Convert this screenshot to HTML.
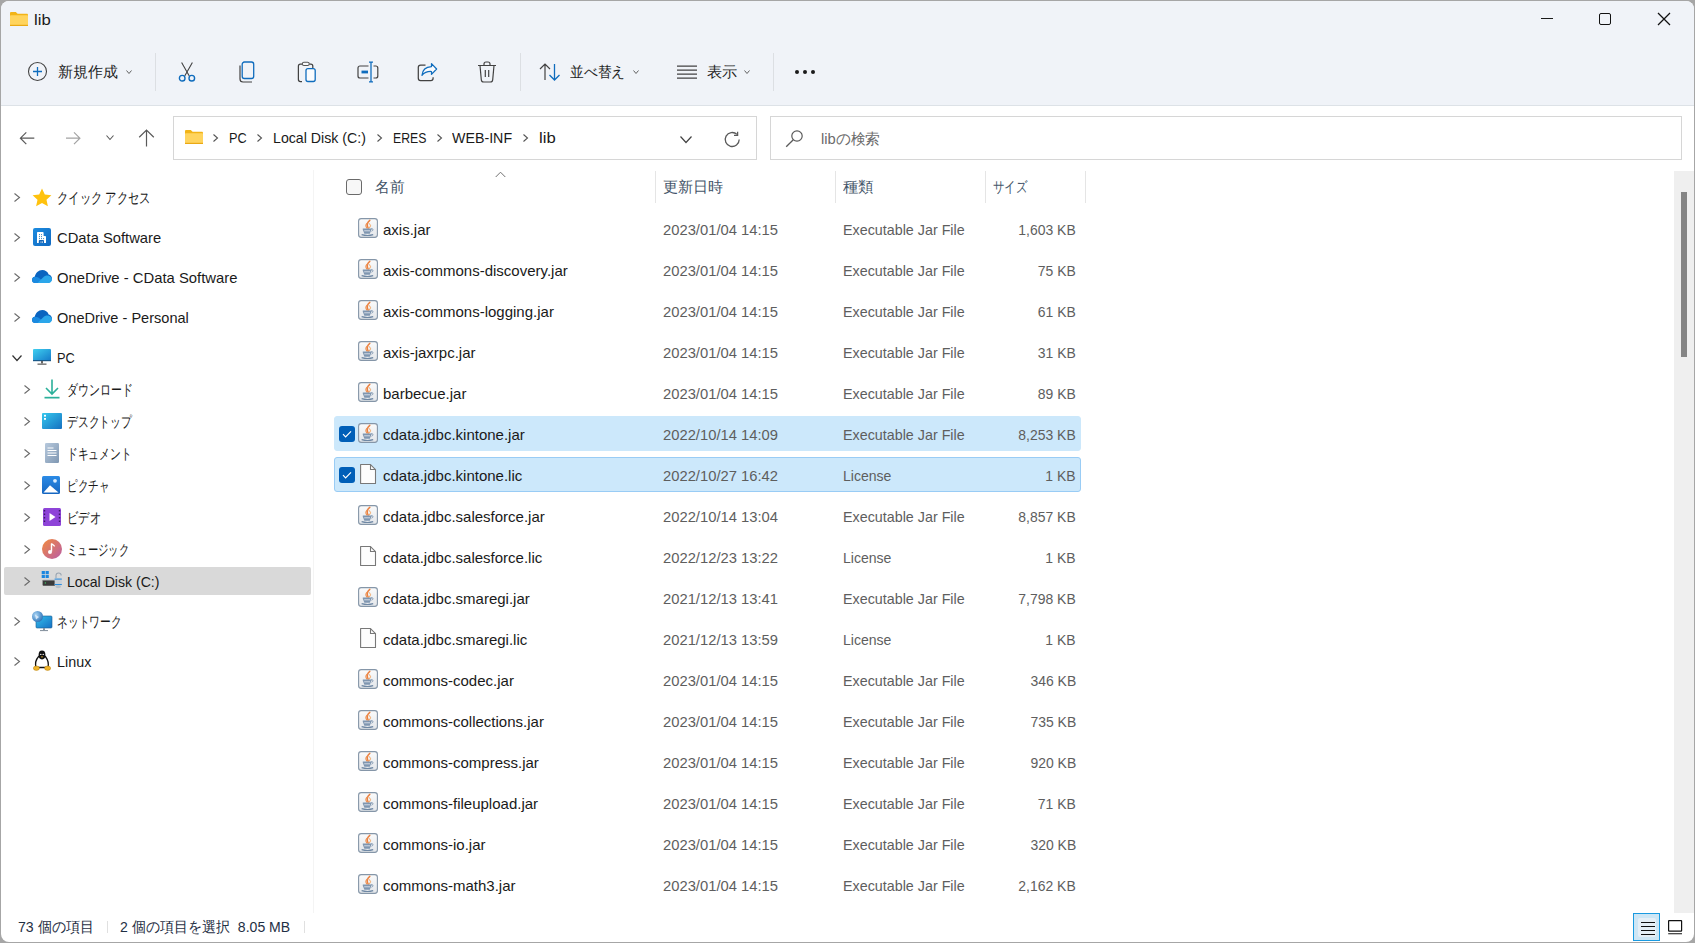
<!DOCTYPE html>
<html><head><meta charset="utf-8"><title>lib</title>
<style>
html,body{margin:0;padding:0;width:1695px;height:943px;overflow:hidden;background:#a6a6a6}
#win{position:absolute;left:0;top:0;width:1695px;height:943px;background:#fff;clip-path:inset(1px 1px 1px 1px round 8px)}
#band{position:absolute;left:0;top:0;width:1695px;height:105px;background:#f0f3f8;border-bottom:1px solid #dde2e7}
.abs,.ic,.t{position:absolute}
.t{font-family:"Liberation Sans",sans-serif;font-size:15px;line-height:20px;white-space:pre;color:#1a1a1a}
.title{font-size:14px;color:#1a1a1a}
.tb{color:#1f1f1f}
.addr{color:#1a1a1a}
.ph{color:#6b6b6b}
.side{color:#1a1a1a}
.hdr{color:#445569}
.nm{color:#1a1a1a}
.dt{color:#5e5e5e}
.st{color:#1f2f44}
.sep{width:1px;background:#dcdfe3}
</style></head><body>
<svg width="0" height="0" style="position:absolute"><defs>
<linearGradient id="jg" x1="0" y1="0" x2="0" y2="1"><stop offset="0" stop-color="#fbfbfb"/><stop offset="1" stop-color="#e3e6ea"/></linearGradient>
<linearGradient id="pcg" x1="0" y1="0" x2="1" y2="1"><stop offset="0" stop-color="#3fd0f0"/><stop offset="1" stop-color="#1478c8"/></linearGradient>
<linearGradient id="dkg" x1="0" y1="0" x2="1" y2="1"><stop offset="0" stop-color="#35c8ee"/><stop offset="1" stop-color="#1670c0"/></linearGradient>
<linearGradient id="dcg" x1="0" y1="0" x2="1" y2="1"><stop offset="0" stop-color="#b7c9dd"/><stop offset="1" stop-color="#7f97b2"/></linearGradient>
</defs></svg>
<div id="win">
<div id="band"></div>
<svg class="ic" style="left:10px;top:12px" width="18" height="14" viewBox="0 0 18 14">
<path d="M0 1.2C0 0.5 0.5 0 1.2 0h4.6l1.8 1.8h9.2c0.7 0 1.2 0.5 1.2 1.2V4H0z" fill="#f2b418"/>
<rect x="0" y="3.2" width="18" height="10.8" rx="0.8" fill="#ffd45e"/>
<rect x="0" y="12.8" width="18" height="1.2" fill="#eaa914"/>
</svg>
<div class="t title fit" style="left:34px;top:10px;transform:scaleX(1.1915);transform-origin:left center;">lib</div>
<div class="abs" style="left:1541px;top:18px;width:12px;height:1px;background:#1a1a1a"></div>
<div class="abs" style="left:1599px;top:13px;width:10px;height:10px;border:1.2px solid #111;border-radius:2px"></div>
<svg class="ic" style="left:1657px;top:12px" width="14" height="14" viewBox="0 0 14 14"><path d="M1 1L13 13M13 1L1 13" stroke="#111" stroke-width="1.25"/></svg>
<svg class="ic" style="left:27px;top:61px" width="21" height="21" viewBox="0 0 21 21"><circle cx="10.5" cy="10.5" r="9" fill="none" stroke="#424242" stroke-width="1.1"/><path d="M10.5 6v9M6 10.5h9" stroke="#0f6cbd" stroke-width="1.3"/></svg>
<div class="t tb fit" style="left:58px;top:62px;transform:scaleX(0.9950);transform-origin:left center;">新規作成</div>
<svg class="ic" style="left:125px;top:69.0px" width="8" height="6" viewBox="-1 -1 8 6"><path d="M0.5 0.5L3.0 3.5L5.5 0.5" fill="none" stroke="#606060" stroke-width="1"/></svg>
<div class="abs sep" style="left:155px;top:53px;height:38px"></div>
<svg class="ic" style="left:177px;top:61px" width="20" height="22" viewBox="0 0 20 22">
<path d="M4.6 1.4L12.3 15M15.4 1.4L7.7 15" stroke="#424242" stroke-width="1.1" fill="none"/>
<circle cx="5.2" cy="17.2" r="2.8" fill="none" stroke="#0f6cbd" stroke-width="1.4"/>
<circle cx="14.8" cy="17.2" r="2.8" fill="none" stroke="#0f6cbd" stroke-width="1.4"/>
</svg>
<svg class="ic" style="left:238px;top:61px" width="18" height="22" viewBox="0 0 18 22">
<path d="M2 4.5v13.5c0 1.7 1.3 3 3 3h9" fill="none" stroke="#424242" stroke-width="1.2"/>
<rect x="4.2" y="1" width="11.5" height="16.5" rx="2.2" fill="none" stroke="#0f6cbd" stroke-width="1.3"/>
</svg>
<svg class="ic" style="left:297px;top:61px" width="20" height="22" viewBox="0 0 20 22">
<path d="M5 20.5H3.4c-1.2 0-2-0.8-2-2V5.2c0-1.2 0.8-2 2-2h1.8M12.2 3.2h1.6c1.2 0 2 0.8 2 2v2" fill="none" stroke="#424242" stroke-width="1.25"/>
<rect x="5.4" y="1.3" width="6.8" height="3.2" rx="1.5" fill="#f8f9fb" stroke="#555" stroke-width="1.05"/>
<rect x="9" y="7.6" width="9.2" height="12.9" rx="2" fill="#fbfcfe" stroke="#0f6cbd" stroke-width="1.3"/>
</svg>
<svg class="ic" style="left:357px;top:61px" width="22" height="22" viewBox="0 0 22 22">
<path d="M11.5 5H3c-1.2 0-2 0.8-2 2v8c0 1.2 0.8 2 2 2h8.5M16.5 5h2.3c1.2 0 2 0.8 2 2v8c0 1.2-0.8 2-2 2h-2.3" fill="none" stroke="#424242" stroke-width="1.2"/>
<path d="M14 1v20M12 1.2h4M12 20.8h4" stroke="#0f6cbd" stroke-width="1.3"/>
<rect x="4.5" y="9.6" width="6.5" height="2.8" fill="#0f6cbd"/>
</svg>
<svg class="ic" style="left:417px;top:62px" width="21" height="21" viewBox="0 0 21 21">
<path d="M8.5 3H3.6C2.2 3 1.3 3.9 1.3 5.3v11c0 1.4 0.9 2.3 2.3 2.3h10.2c1.4 0 2.3-0.9 2.3-2.3v-1" fill="none" stroke="#424242" stroke-width="1.25"/>
<path d="M5 13.4C5.4 8 9 4.8 14.5 4.6V1.6L19.6 7L14.5 12.4V9.5C10.2 9.3 7.2 10.6 5 13.4Z" fill="#fbfcfe" stroke="#0f6cbd" stroke-width="1.25" stroke-linejoin="round"/>
</svg>
<svg class="ic" style="left:477px;top:61px" width="20" height="22" viewBox="0 0 20 22">
<path d="M1 4.5h18M7 4.2V3c0-1.1 0.9-2 2-2h2c1.1 0 2 0.9 2 2v1.2" fill="none" stroke="#424242" stroke-width="1.2"/>
<path d="M3 4.5l1.3 14.2c0.1 1.3 1.1 2.3 2.4 2.3h6.6c1.3 0 2.3-1 2.4-2.3L17 4.5" fill="none" stroke="#424242" stroke-width="1.2"/>
<path d="M8.3 9v7M11.7 9v7" stroke="#424242" stroke-width="1.2"/>
</svg>
<div class="abs sep" style="left:520px;top:53px;height:38px"></div>
<svg class="ic" style="left:539px;top:63px" width="22" height="18" viewBox="0 0 22 18">
<path d="M6 17V1M1 6l5-5 5 5" fill="none" stroke="#424242" stroke-width="1.2"/>
<path d="M15.5 1v16M10.5 12l5 5 5-5" fill="none" stroke="#0f6cbd" stroke-width="1.3"/>
</svg>
<div class="t tb fit" style="left:570px;top:62px;transform:scaleX(0.9167);transform-origin:left center;">並べ替え</div>
<svg class="ic" style="left:632px;top:69.0px" width="8" height="6" viewBox="-1 -1 8 6"><path d="M0.5 0.5L3.0 3.5L5.5 0.5" fill="none" stroke="#606060" stroke-width="1"/></svg>
<svg class="ic" style="left:676px;top:64px" width="22" height="16" viewBox="0 0 22 16">
<path d="M1 2.2h20M1 6.2h20M1 10.2h20M1 14.2h20" stroke="#424242" stroke-width="1.2"/>
</svg>
<div class="t tb fit" style="left:707px;top:62px;transform:scaleX(1.0133);transform-origin:left center;">表示</div>
<svg class="ic" style="left:743px;top:69.0px" width="8" height="6" viewBox="-1 -1 8 6"><path d="M0.5 0.5L3.0 3.5L5.5 0.5" fill="none" stroke="#606060" stroke-width="1"/></svg>
<div class="abs sep" style="left:773px;top:53px;height:38px"></div>
<svg class="ic" style="left:793px;top:69px" width="24" height="6" viewBox="0 0 24 6">
<circle cx="4" cy="3" r="2" fill="#1a1a1a"/><circle cx="12" cy="3" r="2" fill="#1a1a1a"/><circle cx="20" cy="3" r="2" fill="#1a1a1a"/>
</svg>
<svg class="ic" style="left:19px;top:131px" width="17" height="15" viewBox="0 0 17 15"><path d="M15.3 7.2H1.6M7.3 1.3L1.4 7.2l5.9 5.9" fill="none" stroke="#5a5a5a" stroke-width="1.2"/></svg>
<svg class="ic" style="left:65px;top:131px" width="17" height="15" viewBox="0 0 17 15"><path d="M1 7.2h13.8M9 1.3l5.9 5.9L9 13.1" fill="none" stroke="#a3a3a3" stroke-width="1.2"/></svg>
<svg class="ic" style="left:105px;top:133.5px" width="10" height="7" viewBox="-1 -1 10 7"><path d="M0.5 0.5L4.0 4.5L7.5 0.5" fill="none" stroke="#5a5a5a" stroke-width="1.1"/></svg>
<svg class="ic" style="left:138px;top:129px" width="17" height="18" viewBox="0 0 17 18"><path d="M8.5 17.5V1.5M1.2 8.3l7.3-7.2 7.3 7.2" fill="none" stroke="#5a5a5a" stroke-width="1.2"/></svg>
<div class="abs" style="left:173px;top:116px;width:582px;height:42px;border:1px solid #d6d6d6;background:#fff"></div>
<svg class="ic" style="left:185px;top:130px" width="18" height="14" viewBox="0 0 18 14">
<path d="M0 1.2C0 0.5 0.5 0 1.2 0h4.6l1.8 1.8h9.2c0.7 0 1.2 0.5 1.2 1.2V4H0z" fill="#f2b418"/>
<rect x="0" y="3.2" width="18" height="10.8" rx="0.8" fill="#ffd45e"/>
<rect x="0" y="12.8" width="18" height="1.2" fill="#eaa914"/>
</svg>
<svg class="ic" style="left:212px;top:133.0px" width="7" height="10" viewBox="-1 -1 7 10"><path d="M0.5 0.5L4.5 4.0L0.5 7.5" fill="none" stroke="#555" stroke-width="1.1"/></svg>
<div class="t addr fit" style="left:229px;top:128px;transform:scaleX(0.8492);transform-origin:left center;">PC</div>
<svg class="ic" style="left:256px;top:133.0px" width="7" height="10" viewBox="-1 -1 7 10"><path d="M0.5 0.5L4.5 4.0L0.5 7.5" fill="none" stroke="#555" stroke-width="1.1"/></svg>
<div class="t addr fit" style="left:273px;top:128px;transform:scaleX(0.9445);transform-origin:left center;">Local Disk (C:)</div>
<svg class="ic" style="left:376px;top:133.0px" width="7" height="10" viewBox="-1 -1 7 10"><path d="M0.5 0.5L4.5 4.0L0.5 7.5" fill="none" stroke="#555" stroke-width="1.1"/></svg>
<div class="t addr fit" style="left:393px;top:128px;transform:scaleX(0.8174);transform-origin:left center;">ERES</div>
<svg class="ic" style="left:436px;top:133.0px" width="7" height="10" viewBox="-1 -1 7 10"><path d="M0.5 0.5L4.5 4.0L0.5 7.5" fill="none" stroke="#555" stroke-width="1.1"/></svg>
<div class="t addr fit" style="left:452px;top:128px;transform:scaleX(0.9490);transform-origin:left center;">WEB-INF</div>
<svg class="ic" style="left:522px;top:133.0px" width="7" height="10" viewBox="-1 -1 7 10"><path d="M0.5 0.5L4.5 4.0L0.5 7.5" fill="none" stroke="#555" stroke-width="1.1"/></svg>
<div class="t addr fit" style="left:539px;top:128px;transform:scaleX(1.1122);transform-origin:left center;">lib</div>
<svg class="ic" style="left:679px;top:134.5px" width="14" height="9" viewBox="-1 -1 14 9"><path d="M0.5 0.5L6.0 6.5L11.5 0.5" fill="none" stroke="#444" stroke-width="1.2"/></svg>
<svg class="ic" style="left:723px;top:131px" width="19" height="17" viewBox="0 0 19 17"><path d="M16.2 8.5A7 7 0 1 1 14 3.4" fill="none" stroke="#5a5a5a" stroke-width="1.3"/><path d="M14.6 0.8v3.6h-3.6" fill="none" stroke="#5a5a5a" stroke-width="1.3"/></svg>
<div class="abs" style="left:770px;top:116px;width:910px;height:42px;border:1px solid #d6d6d6;background:#fff"></div>
<svg class="ic" style="left:785px;top:129px" width="19" height="19" viewBox="0 0 19 19"><circle cx="12" cy="7" r="5.2" fill="none" stroke="#5a5a5a" stroke-width="1.2"/><path d="M8.3 10.7L1.2 17.8" stroke="#5a5a5a" stroke-width="1.3"/></svg>
<div class="t ph fit" style="left:821px;top:129px;transform:scaleX(0.9831);transform-origin:left center;">libの検索</div>
<div class="abs" style="left:313px;top:170px;width:1px;height:743px;background:#f4f4f4"></div>
<div class="abs" style="left:4px;top:567px;width:307px;height:28px;background:#d9d9d9;border-radius:2px"></div>
<svg class="ic" style="left:13px;top:192.0px" width="8" height="11" viewBox="-1 -1 8 11"><path d="M0.5 0.5L5.5 4.5L0.5 8.5" fill="none" stroke="#6a6a6a" stroke-width="1.1"/></svg>
<svg class="ic" style="left:32px;top:188px" width="20" height="19" viewBox="0 0 20 19"><path d="M10 0.6l2.8 6 6.6 0.7-4.9 4.5 1.4 6.5L10 15l-5.9 3.3 1.4-6.5L0.6 7.3l6.6-0.7z" fill="#ffc20e"/></svg>
<div class="t side fit" style="left:57px;top:188px;transform:scaleX(0.7546);transform-origin:left center;">クイック アクセス</div>
<svg class="ic" style="left:13px;top:232.0px" width="8" height="11" viewBox="-1 -1 8 11"><path d="M0.5 0.5L5.5 4.5L0.5 8.5" fill="none" stroke="#6a6a6a" stroke-width="1.1"/></svg>
<svg class="ic" style="left:33px;top:228px" width="18" height="18" viewBox="0 0 18 18"><defs><linearGradient id="cg" x1="0" y1="0" x2="1" y2="1"><stop offset="0" stop-color="#1c8ce0"/><stop offset="1" stop-color="#1168c0"/></linearGradient></defs><rect width="18" height="18" rx="2" fill="url(#cg)"/><path d="M4 5.1c0-0.6 0.4-1 1-1h4.6c0.6 0 1 0.4 1 1v3h1.4c0.6 0 1 0.4 1 1V15H4z" fill="#fff"/><circle cx="6.5" cy="6.6" r="0.55" fill="#2a7fc0"/><circle cx="8.5" cy="6.6" r="0.55" fill="#2a7fc0"/><circle cx="6.5" cy="8.6" r="0.55" fill="#2a7fc0"/><circle cx="8.5" cy="8.6" r="0.55" fill="#2a7fc0"/><circle cx="6.5" cy="10.6" r="0.55" fill="#2a7fc0"/><circle cx="8.5" cy="10.6" r="0.55" fill="#2a7fc0"/><circle cx="10.6" cy="10.6" r="0.55" fill="#2a7fc0"/><path d="M5.8 15v-2.2c0-0.5 0.4-0.8 0.8-0.8h3.6c0.5 0 0.8 0.4 0.8 0.8V15h-1.3v-1.8h-0.6V15H8.3v-1.8h-0.6V15z" fill="#1466b8"/></svg>
<div class="t side fit" style="left:57px;top:228px;transform:scaleX(0.9840);transform-origin:left center;">CData Software</div>
<svg class="ic" style="left:13px;top:272.0px" width="8" height="11" viewBox="-1 -1 8 11"><path d="M0.5 0.5L5.5 4.5L0.5 8.5" fill="none" stroke="#6a6a6a" stroke-width="1.1"/></svg>
<svg class="ic" style="left:32px;top:270px" width="20" height="13" viewBox="0 0 20 13"><path d="M3.2 13C1.4 13 0 11.6 0 9.9 0 8.3 1.2 7 2.8 6.8 3.4 3 6.5 0 10.3 0 13.2 0 15.7 1.8 16.7 4.4 18.6 4.8 20 6.5 20 8.6 20 11 18.1 13 15.7 13z" fill="#0a64c0"/><path d="M0 9.9C0 8.3 1.2 7 2.8 6.8 5 6.8 6.8 7.6 8.3 8.9L13 11.4 15.7 13H3.2C1.4 13 0 11.6 0 9.9z" fill="#1a8ae0"/><path d="M5.6 13L11.3 7.3C12.3 6.3 13.7 5.6 15.3 5.6 17.9 5.6 20 7.6 20 9.6 20 11.5 18.4 13 16.4 13z" fill="#2ba6ea"/></svg>
<div class="t side fit" style="left:57px;top:268px;transform:scaleX(0.9881);transform-origin:left center;">OneDrive - CData Software</div>
<svg class="ic" style="left:13px;top:312.0px" width="8" height="11" viewBox="-1 -1 8 11"><path d="M0.5 0.5L5.5 4.5L0.5 8.5" fill="none" stroke="#6a6a6a" stroke-width="1.1"/></svg>
<svg class="ic" style="left:32px;top:310px" width="20" height="13" viewBox="0 0 20 13"><path d="M3.2 13C1.4 13 0 11.6 0 9.9 0 8.3 1.2 7 2.8 6.8 3.4 3 6.5 0 10.3 0 13.2 0 15.7 1.8 16.7 4.4 18.6 4.8 20 6.5 20 8.6 20 11 18.1 13 15.7 13z" fill="#0a64c0"/><path d="M0 9.9C0 8.3 1.2 7 2.8 6.8 5 6.8 6.8 7.6 8.3 8.9L13 11.4 15.7 13H3.2C1.4 13 0 11.6 0 9.9z" fill="#1a8ae0"/><path d="M5.6 13L11.3 7.3C12.3 6.3 13.7 5.6 15.3 5.6 17.9 5.6 20 7.6 20 9.6 20 11.5 18.4 13 16.4 13z" fill="#2ba6ea"/></svg>
<div class="t side fit" style="left:57px;top:308px;transform:scaleX(0.9699);transform-origin:left center;">OneDrive - Personal</div>
<svg class="ic" style="left:11px;top:353.5px" width="12" height="8" viewBox="-1 -1 12 8"><path d="M0.5 0.5L5.0 5.5L9.5 0.5" fill="none" stroke="#333" stroke-width="1.2"/></svg>
<svg class="ic" style="left:33px;top:349px" width="18" height="16" viewBox="0 0 18 16"><rect width="18" height="12" rx="1" fill="url(#pcg)"/><rect y="11" width="18" height="1.2" fill="#1b5a8a"/><rect x="8" y="12" width="2" height="2.5" fill="#666"/><rect x="4.5" y="14.5" width="9" height="1.3" fill="#666"/></svg>
<div class="t side fit" style="left:57px;top:348px;transform:scaleX(0.8540);transform-origin:left center;">PC</div>
<svg class="ic" style="left:23px;top:384.0px" width="8" height="11" viewBox="-1 -1 8 11"><path d="M0.5 0.5L5.5 4.5L0.5 8.5" fill="none" stroke="#6a6a6a" stroke-width="1.1"/></svg>
<svg class="ic" style="left:44px;top:379px" width="16" height="20" viewBox="0 0 16 20"><path d="M8 0.5v14M2 9l6 6 6-6" fill="none" stroke="#2bb09a" stroke-width="1.6"/><rect x="0.5" y="17.8" width="15" height="1.7" fill="#2bb09a"/></svg>
<div class="t side fit" style="left:67px;top:380px;transform:scaleX(0.7278);transform-origin:left center;">ダウンロード</div>
<svg class="ic" style="left:23px;top:416.0px" width="8" height="11" viewBox="-1 -1 8 11"><path d="M0.5 0.5L5.5 4.5L0.5 8.5" fill="none" stroke="#6a6a6a" stroke-width="1.1"/></svg>
<svg class="ic" style="left:42px;top:413px" width="20" height="16" viewBox="0 0 20 16"><rect width="20" height="16" rx="1" fill="url(#dkg)"/><rect x="2" y="1.8" width="2" height="1.8" fill="#fff"/><rect x="2" y="5" width="2" height="1.8" fill="#fff"/></svg>
<div class="t side fit" style="left:67px;top:412px;transform:scaleX(0.7222);transform-origin:left center;">デスクトップ</div>
<svg class="ic" style="left:23px;top:448.0px" width="8" height="11" viewBox="-1 -1 8 11"><path d="M0.5 0.5L5.5 4.5L0.5 8.5" fill="none" stroke="#6a6a6a" stroke-width="1.1"/></svg>
<svg class="ic" style="left:45px;top:443px" width="14" height="20" viewBox="0 0 14 20"><rect width="14" height="20" rx="1.2" fill="url(#dcg)"/><path d="M2.5 5h6M2.5 7.5h9M2.5 10h9M2.5 12.5h9" stroke="#fff" stroke-width="1"/></svg>
<div class="t side fit" style="left:67px;top:444px;transform:scaleX(0.7156);transform-origin:left center;">ドキュメント</div>
<svg class="ic" style="left:23px;top:480.0px" width="8" height="11" viewBox="-1 -1 8 11"><path d="M0.5 0.5L5.5 4.5L0.5 8.5" fill="none" stroke="#6a6a6a" stroke-width="1.1"/></svg>
<svg class="ic" style="left:42px;top:476px" width="18" height="18" viewBox="0 0 18 18"><defs><linearGradient id="pg" x1="0" y1="0" x2="0" y2="1"><stop offset="0" stop-color="#2b8be6"/><stop offset="1" stop-color="#1565c0"/></linearGradient></defs><rect width="18" height="18" rx="1.5" fill="url(#pg)"/><path d="M1.5 16.5L8 9.2l8.5 7.3z" fill="#fff"/><circle cx="13" cy="4.8" r="1.9" fill="#d8ecff"/></svg>
<div class="t side fit" style="left:67px;top:476px;transform:scaleX(0.7067);transform-origin:left center;">ピクチャ</div>
<svg class="ic" style="left:23px;top:512.0px" width="8" height="11" viewBox="-1 -1 8 11"><path d="M0.5 0.5L5.5 4.5L0.5 8.5" fill="none" stroke="#6a6a6a" stroke-width="1.1"/></svg>
<svg class="ic" style="left:43px;top:508px" width="18" height="18" viewBox="0 0 18 18"><rect width="18" height="18" rx="1.5" fill="#8e44d8"/><path d="M0.8 2h1.4v1.4H0.8zM0.8 5.5h1.4v1.4H0.8zM0.8 9h1.4v1.4H0.8zM0.8 12.5h1.4v1.4H0.8zM15.8 2h1.4v1.4h-1.4zM15.8 5.5h1.4v1.4h-1.4zM15.8 9h1.4v1.4h-1.4zM15.8 12.5h1.4v1.4h-1.4z" fill="#3b1a66"/><path d="M6.5 5v8l6-4z" fill="#fff"/></svg>
<div class="t side fit" style="left:67px;top:508px;transform:scaleX(0.7511);transform-origin:left center;">ビデオ</div>
<svg class="ic" style="left:23px;top:544.0px" width="8" height="11" viewBox="-1 -1 8 11"><path d="M0.5 0.5L5.5 4.5L0.5 8.5" fill="none" stroke="#6a6a6a" stroke-width="1.1"/></svg>
<svg class="ic" style="left:42px;top:539px" width="20" height="20" viewBox="0 0 20 20"><defs><linearGradient id="mg" x1="0" y1="0" x2="1" y2="1"><stop offset="0" stop-color="#f28a3c"/><stop offset="1" stop-color="#b95da8"/></linearGradient></defs><circle cx="10" cy="10" r="10" fill="url(#mg)"/><path d="M9.5 4.5v8" stroke="#fff" stroke-width="1.4"/><circle cx="8" cy="13" r="2" fill="#fff"/><path d="M9.5 4.5c1 1.5 2.8 1.5 3 3" fill="none" stroke="#fff" stroke-width="1.3"/></svg>
<div class="t side fit" style="left:67px;top:540px;transform:scaleX(0.6889);transform-origin:left center;">ミュージック</div>
<svg class="ic" style="left:23px;top:576.0px" width="8" height="11" viewBox="-1 -1 8 11"><path d="M0.5 0.5L5.5 4.5L0.5 8.5" fill="none" stroke="#6a6a6a" stroke-width="1.1"/></svg>
<svg class="ic" style="left:41px;top:570px" width="22" height="20" viewBox="0 0 22 20"><path d="M0.7 1h3.2v3.2H0.7zM4.6 1h3.2v3.2H4.6zM0.7 4.9h3.2v3.2H0.7zM4.6 4.9h3.2v3.2H4.6z" fill="#1a86e0"/><rect x="1.6" y="9.8" width="13" height="6" rx="0.8" fill="#3a3a3a"/><rect x="1.6" y="9.2" width="13" height="1.2" fill="#cfd4da"/><rect x="3.8" y="12.4" width="1.1" height="1.1" fill="#3ddc6a"/><path d="M15 8.2V5.6a2.6 2.6 0 0 1 5.2 0" fill="none" stroke="#9aa6b2" stroke-width="1.1"/><rect x="13.6" y="8" width="7.2" height="8" rx="1" fill="#c9d0d8"/><rect x="13.6" y="8.6" width="7.2" height="1" fill="#2a8ee0"/><rect x="13.6" y="14" width="7.2" height="1" fill="#2a8ee0"/><ellipse cx="17.2" cy="16.6" rx="2.8" ry="1.6" fill="#b8c0c8"/></svg>
<div class="t side fit" style="left:67px;top:572px;transform:scaleX(0.9404);transform-origin:left center;">Local Disk (C:)</div>
<svg class="ic" style="left:13px;top:616.0px" width="8" height="11" viewBox="-1 -1 8 11"><path d="M0.5 0.5L5.5 4.5L0.5 8.5" fill="none" stroke="#6a6a6a" stroke-width="1.1"/></svg>
<svg class="ic" style="left:31px;top:610px" width="22" height="22" viewBox="0 0 22 22"><defs><linearGradient id="ng" x1="0" y1="0" x2="1" y2="1"><stop offset="0" stop-color="#34c0ec"/><stop offset="1" stop-color="#1670c4"/></linearGradient><radialGradient id="gg" cx="0.35" cy="0.35" r="0.7"><stop offset="0" stop-color="#a8d4f4"/><stop offset="1" stop-color="#2f74b8"/></radialGradient></defs><rect x="5" y="6" width="16" height="12" rx="1" fill="url(#ng)" stroke="#1a5a90" stroke-width="0.6"/><rect x="12" y="18" width="2" height="2" fill="#8a96a2"/><rect x="9" y="20" width="8" height="1.1" fill="#8a96a2"/><circle cx="6.5" cy="6.5" r="5.5" fill="url(#gg)"/><path d="M4 4.5l4 2.5-3 2.5z" fill="#e8f4ff" opacity="0.8"/></svg>
<div class="t side fit" style="left:57px;top:612px;transform:scaleX(0.7167);transform-origin:left center;">ネットワーク</div>
<svg class="ic" style="left:13px;top:656.0px" width="8" height="11" viewBox="-1 -1 8 11"><path d="M0.5 0.5L5.5 4.5L0.5 8.5" fill="none" stroke="#6a6a6a" stroke-width="1.1"/></svg>
<svg class="ic" style="left:33px;top:650px" width="18" height="21" viewBox="0 0 18 21"><path d="M5.6 6.5C3 9.5 1.8 13.5 3.2 17.5h11.6c1.4-4-0.2-8-2.4-11z" fill="#fff" stroke="#111" stroke-width="1.3"/><ellipse cx="9" cy="5" rx="3.4" ry="4.4" fill="#111"/><circle cx="7.8" cy="4.4" r="0.7" fill="#fff"/><circle cx="10.2" cy="4.4" r="0.7" fill="#fff"/><path d="M7.6 6.4h2.8L9 7.8z" fill="#f0b429"/><ellipse cx="3.4" cy="18.2" rx="3" ry="2.2" fill="#f0b429" stroke="#b47e10" stroke-width="0.5"/><ellipse cx="14.6" cy="18.2" rx="3" ry="2.2" fill="#f0b429" stroke="#b47e10" stroke-width="0.5"/></svg>
<div class="t side fit" style="left:57px;top:652px;transform:scaleX(0.9565);transform-origin:left center;">Linux</div>
<div class="abs" style="left:346px;top:179px;width:14px;height:14px;border:1px solid #6a6a6a;border-radius:3px;background:#f7f7f7"></div>
<div class="t hdr fit" style="left:375px;top:177px;transform:scaleX(0.9800);transform-origin:left center;">名前</div>
<svg class="ic" style="left:495px;top:171px" width="11" height="7" viewBox="0 0 11 7"><path d="M0.7 6L5.5 1.2 10.3 6" fill="none" stroke="#707070" stroke-width="1"/></svg>
<div class="abs" style="left:655px;top:171px;width:1px;height:32px;background:#e5e5e5"></div>
<div class="abs" style="left:835px;top:171px;width:1px;height:32px;background:#e5e5e5"></div>
<div class="abs" style="left:985px;top:171px;width:1px;height:32px;background:#e5e5e5"></div>
<div class="abs" style="left:1085px;top:171px;width:1px;height:32px;background:#e5e5e5"></div>
<div class="t hdr fit" style="left:663px;top:177px;transform:scaleX(1.0033);transform-origin:left center;">更新日時</div>
<div class="t hdr fit" style="left:843px;top:177px;transform:scaleX(1.0300);transform-origin:left center;">種類</div>
<div class="t hdr fit" style="left:993px;top:177px;transform:scaleX(0.7622);transform-origin:left center;">サイズ</div>
<svg class="ic" style="left:358px;top:218px" width="20" height="20" viewBox="0 0 20 20">
<rect x="0.6" y="0.6" width="18.8" height="18.8" rx="2.6" fill="url(#jg)" stroke="#8596a8" stroke-width="1.1"/>
<path d="M11.8 2.3Q7.6 5.6 10.2 10.2" fill="none" stroke="#ea8040" stroke-width="1.5" stroke-linecap="round"/>
<path d="M9.2 5.2Q6.6 7.4 9.0 10.2" fill="none" stroke="#ee9050" stroke-width="1.1" stroke-linecap="round"/>
<path d="M11.6 5.6Q14 7.6 11.4 10.2" fill="none" stroke="#f2a865" stroke-width="1" stroke-linecap="round"/>
<path d="M4.8 10.6h8.6v1.1l-1.6 4.1H6.4l-1.6-4.1z" fill="#7f96b0"/>
<path d="M6.2 12.8h5.8" stroke="#e8eef4" stroke-width="0.8"/>
<path d="M13 10.9c2.2-0.8 2.8 1.3 0.6 2.4" fill="none" stroke="#7f96b0" stroke-width="1"/>
<path d="M3.6 16.6c3.2 0.9 8.6 0.9 11.6 0" fill="none" stroke="#6f88a4" stroke-width="1.1"/>
</svg>
<div class="t nm" style="left:383px;top:220px;">axis.jar</div>
<div class="t dt" style="left:663px;top:220px;transform:scaleX(0.985);transform-origin:left center;">2023/01/04 14:15</div>
<div class="t dt fit" style="left:843px;top:220px;transform:scaleX(0.9540);transform-origin:left center;">Executable Jar File</div>
<div class="t dt" style="right:619px;top:220px;transform:scaleX(0.93);transform-origin:right center;">1,603 KB</div>
<svg class="ic" style="left:358px;top:259px" width="20" height="20" viewBox="0 0 20 20">
<rect x="0.6" y="0.6" width="18.8" height="18.8" rx="2.6" fill="url(#jg)" stroke="#8596a8" stroke-width="1.1"/>
<path d="M11.8 2.3Q7.6 5.6 10.2 10.2" fill="none" stroke="#ea8040" stroke-width="1.5" stroke-linecap="round"/>
<path d="M9.2 5.2Q6.6 7.4 9.0 10.2" fill="none" stroke="#ee9050" stroke-width="1.1" stroke-linecap="round"/>
<path d="M11.6 5.6Q14 7.6 11.4 10.2" fill="none" stroke="#f2a865" stroke-width="1" stroke-linecap="round"/>
<path d="M4.8 10.6h8.6v1.1l-1.6 4.1H6.4l-1.6-4.1z" fill="#7f96b0"/>
<path d="M6.2 12.8h5.8" stroke="#e8eef4" stroke-width="0.8"/>
<path d="M13 10.9c2.2-0.8 2.8 1.3 0.6 2.4" fill="none" stroke="#7f96b0" stroke-width="1"/>
<path d="M3.6 16.6c3.2 0.9 8.6 0.9 11.6 0" fill="none" stroke="#6f88a4" stroke-width="1.1"/>
</svg>
<div class="t nm" style="left:383px;top:261px;">axis-commons-discovery.jar</div>
<div class="t dt" style="left:663px;top:261px;transform:scaleX(0.985);transform-origin:left center;">2023/01/04 14:15</div>
<div class="t dt fit" style="left:843px;top:261px;transform:scaleX(0.9540);transform-origin:left center;">Executable Jar File</div>
<div class="t dt" style="right:619px;top:261px;transform:scaleX(0.93);transform-origin:right center;">75 KB</div>
<svg class="ic" style="left:358px;top:300px" width="20" height="20" viewBox="0 0 20 20">
<rect x="0.6" y="0.6" width="18.8" height="18.8" rx="2.6" fill="url(#jg)" stroke="#8596a8" stroke-width="1.1"/>
<path d="M11.8 2.3Q7.6 5.6 10.2 10.2" fill="none" stroke="#ea8040" stroke-width="1.5" stroke-linecap="round"/>
<path d="M9.2 5.2Q6.6 7.4 9.0 10.2" fill="none" stroke="#ee9050" stroke-width="1.1" stroke-linecap="round"/>
<path d="M11.6 5.6Q14 7.6 11.4 10.2" fill="none" stroke="#f2a865" stroke-width="1" stroke-linecap="round"/>
<path d="M4.8 10.6h8.6v1.1l-1.6 4.1H6.4l-1.6-4.1z" fill="#7f96b0"/>
<path d="M6.2 12.8h5.8" stroke="#e8eef4" stroke-width="0.8"/>
<path d="M13 10.9c2.2-0.8 2.8 1.3 0.6 2.4" fill="none" stroke="#7f96b0" stroke-width="1"/>
<path d="M3.6 16.6c3.2 0.9 8.6 0.9 11.6 0" fill="none" stroke="#6f88a4" stroke-width="1.1"/>
</svg>
<div class="t nm" style="left:383px;top:302px;">axis-commons-logging.jar</div>
<div class="t dt" style="left:663px;top:302px;transform:scaleX(0.985);transform-origin:left center;">2023/01/04 14:15</div>
<div class="t dt fit" style="left:843px;top:302px;transform:scaleX(0.9540);transform-origin:left center;">Executable Jar File</div>
<div class="t dt" style="right:619px;top:302px;transform:scaleX(0.93);transform-origin:right center;">61 KB</div>
<svg class="ic" style="left:358px;top:341px" width="20" height="20" viewBox="0 0 20 20">
<rect x="0.6" y="0.6" width="18.8" height="18.8" rx="2.6" fill="url(#jg)" stroke="#8596a8" stroke-width="1.1"/>
<path d="M11.8 2.3Q7.6 5.6 10.2 10.2" fill="none" stroke="#ea8040" stroke-width="1.5" stroke-linecap="round"/>
<path d="M9.2 5.2Q6.6 7.4 9.0 10.2" fill="none" stroke="#ee9050" stroke-width="1.1" stroke-linecap="round"/>
<path d="M11.6 5.6Q14 7.6 11.4 10.2" fill="none" stroke="#f2a865" stroke-width="1" stroke-linecap="round"/>
<path d="M4.8 10.6h8.6v1.1l-1.6 4.1H6.4l-1.6-4.1z" fill="#7f96b0"/>
<path d="M6.2 12.8h5.8" stroke="#e8eef4" stroke-width="0.8"/>
<path d="M13 10.9c2.2-0.8 2.8 1.3 0.6 2.4" fill="none" stroke="#7f96b0" stroke-width="1"/>
<path d="M3.6 16.6c3.2 0.9 8.6 0.9 11.6 0" fill="none" stroke="#6f88a4" stroke-width="1.1"/>
</svg>
<div class="t nm" style="left:383px;top:343px;">axis-jaxrpc.jar</div>
<div class="t dt" style="left:663px;top:343px;transform:scaleX(0.985);transform-origin:left center;">2023/01/04 14:15</div>
<div class="t dt fit" style="left:843px;top:343px;transform:scaleX(0.9540);transform-origin:left center;">Executable Jar File</div>
<div class="t dt" style="right:619px;top:343px;transform:scaleX(0.93);transform-origin:right center;">31 KB</div>
<svg class="ic" style="left:358px;top:382px" width="20" height="20" viewBox="0 0 20 20">
<rect x="0.6" y="0.6" width="18.8" height="18.8" rx="2.6" fill="url(#jg)" stroke="#8596a8" stroke-width="1.1"/>
<path d="M11.8 2.3Q7.6 5.6 10.2 10.2" fill="none" stroke="#ea8040" stroke-width="1.5" stroke-linecap="round"/>
<path d="M9.2 5.2Q6.6 7.4 9.0 10.2" fill="none" stroke="#ee9050" stroke-width="1.1" stroke-linecap="round"/>
<path d="M11.6 5.6Q14 7.6 11.4 10.2" fill="none" stroke="#f2a865" stroke-width="1" stroke-linecap="round"/>
<path d="M4.8 10.6h8.6v1.1l-1.6 4.1H6.4l-1.6-4.1z" fill="#7f96b0"/>
<path d="M6.2 12.8h5.8" stroke="#e8eef4" stroke-width="0.8"/>
<path d="M13 10.9c2.2-0.8 2.8 1.3 0.6 2.4" fill="none" stroke="#7f96b0" stroke-width="1"/>
<path d="M3.6 16.6c3.2 0.9 8.6 0.9 11.6 0" fill="none" stroke="#6f88a4" stroke-width="1.1"/>
</svg>
<div class="t nm" style="left:383px;top:384px;">barbecue.jar</div>
<div class="t dt" style="left:663px;top:384px;transform:scaleX(0.985);transform-origin:left center;">2023/01/04 14:15</div>
<div class="t dt fit" style="left:843px;top:384px;transform:scaleX(0.9540);transform-origin:left center;">Executable Jar File</div>
<div class="t dt" style="right:619px;top:384px;transform:scaleX(0.93);transform-origin:right center;">89 KB</div>
<div class="abs" style="left:334px;top:416px;width:745px;height:33px;background:#cce8fb;border:1px solid #cce8fb;border-radius:3px"></div>
<svg class="ic" style="left:339px;top:426px" width="16" height="16" viewBox="0 0 16 16">
<rect x="0" y="0" width="16" height="16" rx="3" fill="#005fb8"/>
<path d="M4 8.2l2.6 2.6 5.4-5.4" fill="none" stroke="#fff" stroke-width="1.2"/>
</svg>
<svg class="ic" style="left:358px;top:423px" width="20" height="20" viewBox="0 0 20 20">
<rect x="0.6" y="0.6" width="18.8" height="18.8" rx="2.6" fill="url(#jg)" stroke="#8596a8" stroke-width="1.1"/>
<path d="M11.8 2.3Q7.6 5.6 10.2 10.2" fill="none" stroke="#ea8040" stroke-width="1.5" stroke-linecap="round"/>
<path d="M9.2 5.2Q6.6 7.4 9.0 10.2" fill="none" stroke="#ee9050" stroke-width="1.1" stroke-linecap="round"/>
<path d="M11.6 5.6Q14 7.6 11.4 10.2" fill="none" stroke="#f2a865" stroke-width="1" stroke-linecap="round"/>
<path d="M4.8 10.6h8.6v1.1l-1.6 4.1H6.4l-1.6-4.1z" fill="#7f96b0"/>
<path d="M6.2 12.8h5.8" stroke="#e8eef4" stroke-width="0.8"/>
<path d="M13 10.9c2.2-0.8 2.8 1.3 0.6 2.4" fill="none" stroke="#7f96b0" stroke-width="1"/>
<path d="M3.6 16.6c3.2 0.9 8.6 0.9 11.6 0" fill="none" stroke="#6f88a4" stroke-width="1.1"/>
</svg>
<div class="t nm" style="left:383px;top:425px;">cdata.jdbc.kintone.jar</div>
<div class="t dt" style="left:663px;top:425px;transform:scaleX(0.985);transform-origin:left center;">2022/10/14 14:09</div>
<div class="t dt fit" style="left:843px;top:425px;transform:scaleX(0.9540);transform-origin:left center;">Executable Jar File</div>
<div class="t dt" style="right:619px;top:425px;transform:scaleX(0.93);transform-origin:right center;">8,253 KB</div>
<div class="abs" style="left:334px;top:457px;width:745px;height:33px;background:#cce8fb;border:1px solid #99ccf5;border-radius:3px"></div>
<svg class="ic" style="left:339px;top:467px" width="16" height="16" viewBox="0 0 16 16">
<rect x="0" y="0" width="16" height="16" rx="3" fill="#005fb8"/>
<path d="M4 8.2l2.6 2.6 5.4-5.4" fill="none" stroke="#fff" stroke-width="1.2"/>
</svg>
<svg class="ic" style="left:358px;top:464px" width="20" height="20" viewBox="0 0 20 20">
<path d="M2.6 0.55h9.9l5 5v13.9H2.6z" fill="#fdfdfd" stroke="#787878" stroke-width="1.1" stroke-linejoin="round"/>
<path d="M12.5 0.55v5h5" fill="none" stroke="#787878" stroke-width="1.1"/>
</svg>
<div class="t nm" style="left:383px;top:466px;">cdata.jdbc.kintone.lic</div>
<div class="t dt" style="left:663px;top:466px;transform:scaleX(0.985);transform-origin:left center;">2022/10/27 16:42</div>
<div class="t dt fit" style="left:843px;top:466px;transform:scaleX(0.9361);transform-origin:left center;">License</div>
<div class="t dt" style="right:619px;top:466px;transform:scaleX(0.93);transform-origin:right center;">1 KB</div>
<svg class="ic" style="left:358px;top:505px" width="20" height="20" viewBox="0 0 20 20">
<rect x="0.6" y="0.6" width="18.8" height="18.8" rx="2.6" fill="url(#jg)" stroke="#8596a8" stroke-width="1.1"/>
<path d="M11.8 2.3Q7.6 5.6 10.2 10.2" fill="none" stroke="#ea8040" stroke-width="1.5" stroke-linecap="round"/>
<path d="M9.2 5.2Q6.6 7.4 9.0 10.2" fill="none" stroke="#ee9050" stroke-width="1.1" stroke-linecap="round"/>
<path d="M11.6 5.6Q14 7.6 11.4 10.2" fill="none" stroke="#f2a865" stroke-width="1" stroke-linecap="round"/>
<path d="M4.8 10.6h8.6v1.1l-1.6 4.1H6.4l-1.6-4.1z" fill="#7f96b0"/>
<path d="M6.2 12.8h5.8" stroke="#e8eef4" stroke-width="0.8"/>
<path d="M13 10.9c2.2-0.8 2.8 1.3 0.6 2.4" fill="none" stroke="#7f96b0" stroke-width="1"/>
<path d="M3.6 16.6c3.2 0.9 8.6 0.9 11.6 0" fill="none" stroke="#6f88a4" stroke-width="1.1"/>
</svg>
<div class="t nm" style="left:383px;top:507px;">cdata.jdbc.salesforce.jar</div>
<div class="t dt" style="left:663px;top:507px;transform:scaleX(0.985);transform-origin:left center;">2022/10/14 13:04</div>
<div class="t dt fit" style="left:843px;top:507px;transform:scaleX(0.9540);transform-origin:left center;">Executable Jar File</div>
<div class="t dt" style="right:619px;top:507px;transform:scaleX(0.93);transform-origin:right center;">8,857 KB</div>
<svg class="ic" style="left:358px;top:546px" width="20" height="20" viewBox="0 0 20 20">
<path d="M2.6 0.55h9.9l5 5v13.9H2.6z" fill="#fdfdfd" stroke="#787878" stroke-width="1.1" stroke-linejoin="round"/>
<path d="M12.5 0.55v5h5" fill="none" stroke="#787878" stroke-width="1.1"/>
</svg>
<div class="t nm" style="left:383px;top:548px;">cdata.jdbc.salesforce.lic</div>
<div class="t dt" style="left:663px;top:548px;transform:scaleX(0.985);transform-origin:left center;">2022/12/23 13:22</div>
<div class="t dt fit" style="left:843px;top:548px;transform:scaleX(0.9361);transform-origin:left center;">License</div>
<div class="t dt" style="right:619px;top:548px;transform:scaleX(0.93);transform-origin:right center;">1 KB</div>
<svg class="ic" style="left:358px;top:587px" width="20" height="20" viewBox="0 0 20 20">
<rect x="0.6" y="0.6" width="18.8" height="18.8" rx="2.6" fill="url(#jg)" stroke="#8596a8" stroke-width="1.1"/>
<path d="M11.8 2.3Q7.6 5.6 10.2 10.2" fill="none" stroke="#ea8040" stroke-width="1.5" stroke-linecap="round"/>
<path d="M9.2 5.2Q6.6 7.4 9.0 10.2" fill="none" stroke="#ee9050" stroke-width="1.1" stroke-linecap="round"/>
<path d="M11.6 5.6Q14 7.6 11.4 10.2" fill="none" stroke="#f2a865" stroke-width="1" stroke-linecap="round"/>
<path d="M4.8 10.6h8.6v1.1l-1.6 4.1H6.4l-1.6-4.1z" fill="#7f96b0"/>
<path d="M6.2 12.8h5.8" stroke="#e8eef4" stroke-width="0.8"/>
<path d="M13 10.9c2.2-0.8 2.8 1.3 0.6 2.4" fill="none" stroke="#7f96b0" stroke-width="1"/>
<path d="M3.6 16.6c3.2 0.9 8.6 0.9 11.6 0" fill="none" stroke="#6f88a4" stroke-width="1.1"/>
</svg>
<div class="t nm" style="left:383px;top:589px;">cdata.jdbc.smaregi.jar</div>
<div class="t dt" style="left:663px;top:589px;transform:scaleX(0.985);transform-origin:left center;">2021/12/13 13:41</div>
<div class="t dt fit" style="left:843px;top:589px;transform:scaleX(0.9540);transform-origin:left center;">Executable Jar File</div>
<div class="t dt" style="right:619px;top:589px;transform:scaleX(0.93);transform-origin:right center;">7,798 KB</div>
<svg class="ic" style="left:358px;top:628px" width="20" height="20" viewBox="0 0 20 20">
<path d="M2.6 0.55h9.9l5 5v13.9H2.6z" fill="#fdfdfd" stroke="#787878" stroke-width="1.1" stroke-linejoin="round"/>
<path d="M12.5 0.55v5h5" fill="none" stroke="#787878" stroke-width="1.1"/>
</svg>
<div class="t nm" style="left:383px;top:630px;">cdata.jdbc.smaregi.lic</div>
<div class="t dt" style="left:663px;top:630px;transform:scaleX(0.985);transform-origin:left center;">2021/12/13 13:59</div>
<div class="t dt fit" style="left:843px;top:630px;transform:scaleX(0.9361);transform-origin:left center;">License</div>
<div class="t dt" style="right:619px;top:630px;transform:scaleX(0.93);transform-origin:right center;">1 KB</div>
<svg class="ic" style="left:358px;top:669px" width="20" height="20" viewBox="0 0 20 20">
<rect x="0.6" y="0.6" width="18.8" height="18.8" rx="2.6" fill="url(#jg)" stroke="#8596a8" stroke-width="1.1"/>
<path d="M11.8 2.3Q7.6 5.6 10.2 10.2" fill="none" stroke="#ea8040" stroke-width="1.5" stroke-linecap="round"/>
<path d="M9.2 5.2Q6.6 7.4 9.0 10.2" fill="none" stroke="#ee9050" stroke-width="1.1" stroke-linecap="round"/>
<path d="M11.6 5.6Q14 7.6 11.4 10.2" fill="none" stroke="#f2a865" stroke-width="1" stroke-linecap="round"/>
<path d="M4.8 10.6h8.6v1.1l-1.6 4.1H6.4l-1.6-4.1z" fill="#7f96b0"/>
<path d="M6.2 12.8h5.8" stroke="#e8eef4" stroke-width="0.8"/>
<path d="M13 10.9c2.2-0.8 2.8 1.3 0.6 2.4" fill="none" stroke="#7f96b0" stroke-width="1"/>
<path d="M3.6 16.6c3.2 0.9 8.6 0.9 11.6 0" fill="none" stroke="#6f88a4" stroke-width="1.1"/>
</svg>
<div class="t nm" style="left:383px;top:671px;">commons-codec.jar</div>
<div class="t dt" style="left:663px;top:671px;transform:scaleX(0.985);transform-origin:left center;">2023/01/04 14:15</div>
<div class="t dt fit" style="left:843px;top:671px;transform:scaleX(0.9540);transform-origin:left center;">Executable Jar File</div>
<div class="t dt" style="right:619px;top:671px;transform:scaleX(0.93);transform-origin:right center;">346 KB</div>
<svg class="ic" style="left:358px;top:710px" width="20" height="20" viewBox="0 0 20 20">
<rect x="0.6" y="0.6" width="18.8" height="18.8" rx="2.6" fill="url(#jg)" stroke="#8596a8" stroke-width="1.1"/>
<path d="M11.8 2.3Q7.6 5.6 10.2 10.2" fill="none" stroke="#ea8040" stroke-width="1.5" stroke-linecap="round"/>
<path d="M9.2 5.2Q6.6 7.4 9.0 10.2" fill="none" stroke="#ee9050" stroke-width="1.1" stroke-linecap="round"/>
<path d="M11.6 5.6Q14 7.6 11.4 10.2" fill="none" stroke="#f2a865" stroke-width="1" stroke-linecap="round"/>
<path d="M4.8 10.6h8.6v1.1l-1.6 4.1H6.4l-1.6-4.1z" fill="#7f96b0"/>
<path d="M6.2 12.8h5.8" stroke="#e8eef4" stroke-width="0.8"/>
<path d="M13 10.9c2.2-0.8 2.8 1.3 0.6 2.4" fill="none" stroke="#7f96b0" stroke-width="1"/>
<path d="M3.6 16.6c3.2 0.9 8.6 0.9 11.6 0" fill="none" stroke="#6f88a4" stroke-width="1.1"/>
</svg>
<div class="t nm" style="left:383px;top:712px;">commons-collections.jar</div>
<div class="t dt" style="left:663px;top:712px;transform:scaleX(0.985);transform-origin:left center;">2023/01/04 14:15</div>
<div class="t dt fit" style="left:843px;top:712px;transform:scaleX(0.9540);transform-origin:left center;">Executable Jar File</div>
<div class="t dt" style="right:619px;top:712px;transform:scaleX(0.93);transform-origin:right center;">735 KB</div>
<svg class="ic" style="left:358px;top:751px" width="20" height="20" viewBox="0 0 20 20">
<rect x="0.6" y="0.6" width="18.8" height="18.8" rx="2.6" fill="url(#jg)" stroke="#8596a8" stroke-width="1.1"/>
<path d="M11.8 2.3Q7.6 5.6 10.2 10.2" fill="none" stroke="#ea8040" stroke-width="1.5" stroke-linecap="round"/>
<path d="M9.2 5.2Q6.6 7.4 9.0 10.2" fill="none" stroke="#ee9050" stroke-width="1.1" stroke-linecap="round"/>
<path d="M11.6 5.6Q14 7.6 11.4 10.2" fill="none" stroke="#f2a865" stroke-width="1" stroke-linecap="round"/>
<path d="M4.8 10.6h8.6v1.1l-1.6 4.1H6.4l-1.6-4.1z" fill="#7f96b0"/>
<path d="M6.2 12.8h5.8" stroke="#e8eef4" stroke-width="0.8"/>
<path d="M13 10.9c2.2-0.8 2.8 1.3 0.6 2.4" fill="none" stroke="#7f96b0" stroke-width="1"/>
<path d="M3.6 16.6c3.2 0.9 8.6 0.9 11.6 0" fill="none" stroke="#6f88a4" stroke-width="1.1"/>
</svg>
<div class="t nm" style="left:383px;top:753px;">commons-compress.jar</div>
<div class="t dt" style="left:663px;top:753px;transform:scaleX(0.985);transform-origin:left center;">2023/01/04 14:15</div>
<div class="t dt fit" style="left:843px;top:753px;transform:scaleX(0.9540);transform-origin:left center;">Executable Jar File</div>
<div class="t dt" style="right:619px;top:753px;transform:scaleX(0.93);transform-origin:right center;">920 KB</div>
<svg class="ic" style="left:358px;top:792px" width="20" height="20" viewBox="0 0 20 20">
<rect x="0.6" y="0.6" width="18.8" height="18.8" rx="2.6" fill="url(#jg)" stroke="#8596a8" stroke-width="1.1"/>
<path d="M11.8 2.3Q7.6 5.6 10.2 10.2" fill="none" stroke="#ea8040" stroke-width="1.5" stroke-linecap="round"/>
<path d="M9.2 5.2Q6.6 7.4 9.0 10.2" fill="none" stroke="#ee9050" stroke-width="1.1" stroke-linecap="round"/>
<path d="M11.6 5.6Q14 7.6 11.4 10.2" fill="none" stroke="#f2a865" stroke-width="1" stroke-linecap="round"/>
<path d="M4.8 10.6h8.6v1.1l-1.6 4.1H6.4l-1.6-4.1z" fill="#7f96b0"/>
<path d="M6.2 12.8h5.8" stroke="#e8eef4" stroke-width="0.8"/>
<path d="M13 10.9c2.2-0.8 2.8 1.3 0.6 2.4" fill="none" stroke="#7f96b0" stroke-width="1"/>
<path d="M3.6 16.6c3.2 0.9 8.6 0.9 11.6 0" fill="none" stroke="#6f88a4" stroke-width="1.1"/>
</svg>
<div class="t nm" style="left:383px;top:794px;">commons-fileupload.jar</div>
<div class="t dt" style="left:663px;top:794px;transform:scaleX(0.985);transform-origin:left center;">2023/01/04 14:15</div>
<div class="t dt fit" style="left:843px;top:794px;transform:scaleX(0.9540);transform-origin:left center;">Executable Jar File</div>
<div class="t dt" style="right:619px;top:794px;transform:scaleX(0.93);transform-origin:right center;">71 KB</div>
<svg class="ic" style="left:358px;top:833px" width="20" height="20" viewBox="0 0 20 20">
<rect x="0.6" y="0.6" width="18.8" height="18.8" rx="2.6" fill="url(#jg)" stroke="#8596a8" stroke-width="1.1"/>
<path d="M11.8 2.3Q7.6 5.6 10.2 10.2" fill="none" stroke="#ea8040" stroke-width="1.5" stroke-linecap="round"/>
<path d="M9.2 5.2Q6.6 7.4 9.0 10.2" fill="none" stroke="#ee9050" stroke-width="1.1" stroke-linecap="round"/>
<path d="M11.6 5.6Q14 7.6 11.4 10.2" fill="none" stroke="#f2a865" stroke-width="1" stroke-linecap="round"/>
<path d="M4.8 10.6h8.6v1.1l-1.6 4.1H6.4l-1.6-4.1z" fill="#7f96b0"/>
<path d="M6.2 12.8h5.8" stroke="#e8eef4" stroke-width="0.8"/>
<path d="M13 10.9c2.2-0.8 2.8 1.3 0.6 2.4" fill="none" stroke="#7f96b0" stroke-width="1"/>
<path d="M3.6 16.6c3.2 0.9 8.6 0.9 11.6 0" fill="none" stroke="#6f88a4" stroke-width="1.1"/>
</svg>
<div class="t nm" style="left:383px;top:835px;">commons-io.jar</div>
<div class="t dt" style="left:663px;top:835px;transform:scaleX(0.985);transform-origin:left center;">2023/01/04 14:15</div>
<div class="t dt fit" style="left:843px;top:835px;transform:scaleX(0.9540);transform-origin:left center;">Executable Jar File</div>
<div class="t dt" style="right:619px;top:835px;transform:scaleX(0.93);transform-origin:right center;">320 KB</div>
<svg class="ic" style="left:358px;top:874px" width="20" height="20" viewBox="0 0 20 20">
<rect x="0.6" y="0.6" width="18.8" height="18.8" rx="2.6" fill="url(#jg)" stroke="#8596a8" stroke-width="1.1"/>
<path d="M11.8 2.3Q7.6 5.6 10.2 10.2" fill="none" stroke="#ea8040" stroke-width="1.5" stroke-linecap="round"/>
<path d="M9.2 5.2Q6.6 7.4 9.0 10.2" fill="none" stroke="#ee9050" stroke-width="1.1" stroke-linecap="round"/>
<path d="M11.6 5.6Q14 7.6 11.4 10.2" fill="none" stroke="#f2a865" stroke-width="1" stroke-linecap="round"/>
<path d="M4.8 10.6h8.6v1.1l-1.6 4.1H6.4l-1.6-4.1z" fill="#7f96b0"/>
<path d="M6.2 12.8h5.8" stroke="#e8eef4" stroke-width="0.8"/>
<path d="M13 10.9c2.2-0.8 2.8 1.3 0.6 2.4" fill="none" stroke="#7f96b0" stroke-width="1"/>
<path d="M3.6 16.6c3.2 0.9 8.6 0.9 11.6 0" fill="none" stroke="#6f88a4" stroke-width="1.1"/>
</svg>
<div class="t nm" style="left:383px;top:876px;">commons-math3.jar</div>
<div class="t dt" style="left:663px;top:876px;transform:scaleX(0.985);transform-origin:left center;">2023/01/04 14:15</div>
<div class="t dt fit" style="left:843px;top:876px;transform:scaleX(0.9540);transform-origin:left center;">Executable Jar File</div>
<div class="t dt" style="right:619px;top:876px;transform:scaleX(0.93);transform-origin:right center;">2,162 KB</div>
<div class="abs" style="left:1674px;top:171px;width:20px;height:742px;background:#efefef"></div>
<div class="abs" style="left:1681px;top:192px;width:6px;height:165px;background:#858585"></div>
<div class="t st fit" style="left:18px;top:917px;transform:scaleX(0.9411);transform-origin:left center;">73 個の項目</div>
<div class="abs" style="left:107px;top:921px;width:1px;height:12px;background:#e0e0e0"></div>
<div class="t st fit" style="left:120px;top:917px;transform:scaleX(0.9366);transform-origin:left center;">2 個の項目を選択  8.05 MB</div>
<div class="abs" style="left:304px;top:921px;width:1px;height:12px;background:#e0e0e0"></div>
<div class="abs" style="left:1633px;top:913px;width:25px;height:26px;border:1.5px solid #1a9ae0;background:#cde6f5"></div>
<div class="abs" style="left:1638px;top:918px;width:18px;height:19px;background:#e6eff6;border-radius:2px"></div>
<svg class="ic" style="left:1640px;top:921px" width="16" height="15" viewBox="0 0 16 15"><path d="M1 1.5h14M1 5.5h14M1 9.5h14M1 13.5h14" stroke="#111" stroke-width="1.1"/></svg>
<svg class="ic" style="left:1666px;top:918px" width="18" height="18" viewBox="0 0 18 18"><rect x="2.6" y="2.6" width="13" height="10.6" rx="0.5" fill="none" stroke="#111" stroke-width="1.2"/><path d="M2.2 15.8h13.8" stroke="#111" stroke-width="1.1"/></svg>
</div>
<script>(function(){var W=[16.7, 59.7, 55.0, 30.4, 17.7, 92.9, 33.4, 60.1, 16.7, 59.0, 93.7, 104.2, 180.4, 131.8, 17.8, 65.5, 65.0, 64.4, 42.4, 33.8, 62.0, 92.5, 64.5, 34.3, 29.4, 60.2, 30.9, 34.3, 121.7, 121.7, 121.7, 121.7, 121.7, 121.7, 48.4, 121.7, 48.4, 121.7, 48.4, 121.7, 121.7, 121.7, 121.7, 121.7, 121.7, 76.1, 170.2];var els=document.querySelectorAll('.fit');for(var i=0;i<els.length&&i<W.length;i++){var e=els[i];var t=e.style.transform;e.style.transform='none';var w=e.getBoundingClientRect().width;if(w>0){e.style.transform='scaleX('+(W[i]/w).toFixed(4)+')';}else{e.style.transform=t;}}})();</script>
</body></html>
